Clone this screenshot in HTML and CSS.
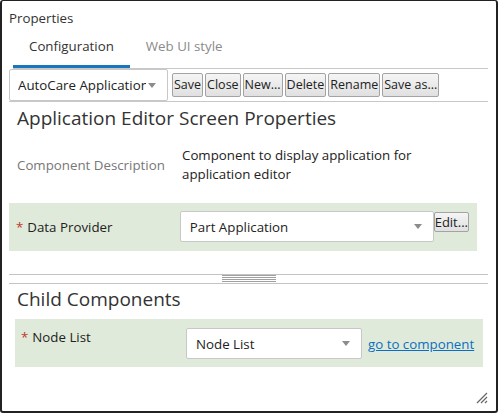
FILE: index.html
```html
<!DOCTYPE html>
<html>
<head>
<meta charset="utf-8">
<link rel="stylesheet" href="styles.css">
</head>
<body>
<div class="window">
  <div class="title">Properties</div>
  <div class="tabs">
    <div class="tab active">Configuration</div>
    <div class="tab">Web UI style</div>
  </div>
  <div class="content">
    <div class="toolbar">
      <div class="select toolbar-select"><span class="select-text">AutoCare Application Editor</span><span class="caret"></span></div>
      <button class="btn">Save</button>
      <button class="btn">Close</button>
      <button class="btn">New...</button>
      <button class="btn">Delete</button>
      <button class="btn">Rename</button>
      <button class="btn">Save as...</button>
    </div>
    <h2 class="heading">Application Editor Screen Properties</h2>
    <div class="desc-row">
      <div class="desc-label">Component Description</div>
      <div class="desc-value">Component to display application for application editor</div>
    </div>
    <div class="field-row">
      <div class="field-label"><span class="req">*</span>Data Provider</div>
      <div class="select provider-select"><span class="select-text">Part Application</span><span class="caret"></span></div>
      <button class="btn edit-btn">Edit...</button>
    </div>
    <div class="splitter"><div class="grip"></div></div>
    <h2 class="heading child-heading">Child Components</h2>
    <div class="field-row child-row">
      <div class="field-label child-label"><span class="req">*</span>Node List</div>
      <div class="select node-select"><span class="select-text">Node List</span><span class="caret"></span></div>
      <a class="link" href="#">go to component</a>
    </div>
  </div>
  <svg class="resize-grip" width="12" height="12" viewBox="0 0 12 12">
    <path d="M11 1 L1 11 M11 5 L5 11 M11 9 L9 11" stroke="#666" stroke-width="1.2" fill="none"/>
  </svg>
</div>
</body>
</html>
```
FILE: styles.css
```css
* { box-sizing: border-box; }
body {
  margin: 0;
  font-family: "Open Sans", "Liberation Sans", sans-serif;
  font-size: 13.3px;
  color: #222;
  background: #fff;
}
.window {
  position: relative;
  width: 498px;
  height: 413px;
  border: 2px solid #222;
  border-top-width: 1px;
  border-radius: 3px;
  background: #fff;
  overflow: hidden;
}
.title {
  padding: 8px 0 0 7px;
  line-height: 18px;
  color: #333;
}
.tabs {
  display: flex;
  margin: 0 8px 0 11px;
  border-bottom: 1px solid #c8c8c8;
}
.tab {
  padding: 9px 16px;
  line-height: 20px;
  border-bottom: 3px solid transparent;
  color: #8a8a8a;
}
.tab.active {
  border-bottom-color: #1b75bc;
  color: #333;
}
.content {
  margin: 0 8px 0 7px;
}
.toolbar {
  display: flex;
  align-items: center;
  gap: 2px;
  height: 33px;
  border-bottom: 1px solid #c8c8c8;
}
.select {
  display: flex;
  align-items: center;
  height: 31px;
  border: 1px solid #c8c8c8;
  border-radius: 2px;
  background: #fff;
  padding: 0 11px 0 9px;
  color: #222;
}
.select-text {
  flex: 1;
  overflow: hidden;
  white-space: nowrap;
}
.caret {
  width: 0;
  height: 0;
  border-left: 4.5px solid transparent;
  border-right: 4.5px solid transparent;
  border-top: 5px solid #8c8c8c;
  margin-left: 2px;
  flex: none;
}
.toolbar-select {
  width: 159px;
  height: 32px;
  margin-right: 2px;
  padding-left: 8px;
}
.btn {
  font: inherit;
  font-size: 12.5px;
  height: 24px;
  line-height: 20px;
  padding: 0 1px;
  border: 1px solid #a3a3a3;
  border-radius: 2px;
  background: linear-gradient(#f5f5f5, #e0e0e0);
  color: #222;
}
.heading {
  margin: 3px 0 0;
  padding-left: 8px;
  font-size: 19px;
  font-weight: normal;
  line-height: 26px;
  color: #333;
}
.desc-row {
  display: flex;
  margin-top: 15px;
  line-height: 19px;
}
.desc-label {
  width: 173px;
  padding-left: 8px;
  align-self: center;
  color: #777;
}
.desc-value {
  width: 280px;
}
.field-row {
  display: flex;
  align-items: center;
  width: 468px;
  margin-top: 19px;
  padding: 8px 8px 9px 0;
  background: #dfeada;
}
.field-label {
  width: 171px;
  padding-left: 7px;
  line-height: 19px;
  padding-top: 2px;
}
.req {
  color: #c0392b;
  margin-right: 4px;
}
.provider-select {
  width: 254px;
}
.edit-btn {
  align-self: flex-start;
  margin-top: 1px;
  height: 20px;
  line-height: 16px;
  padding: 0;
  font-size: 13px;
}
.splitter {
  height: 10px;
  margin-top: 23px;
  border-top: 1px solid #c4c4c4;
  border-bottom: 1px solid #c4c4c4;
}
.grip {
  width: 54px;
  height: 7px;
  margin: 0 auto;
  background: repeating-linear-gradient(#a0a0a0 0 1px, transparent 1px 2px);
}
.child-heading {
  margin-top: 2px;
}
.child-row {
  width: auto;
  margin: 7px 5px 0 6px;
  padding: 9px 0 8px 0;
  align-items: flex-start;
}
.child-label {
  padding-left: 6px;
  padding-top: 0;
}
.node-select {
  width: 176px;
}
.link {
  align-self: center;
  margin-left: 6px;
  color: #0b6fc1;
  text-decoration: underline;
}
.resize-grip {
  position: absolute;
  right: 8px;
  bottom: 7px;
}
```
